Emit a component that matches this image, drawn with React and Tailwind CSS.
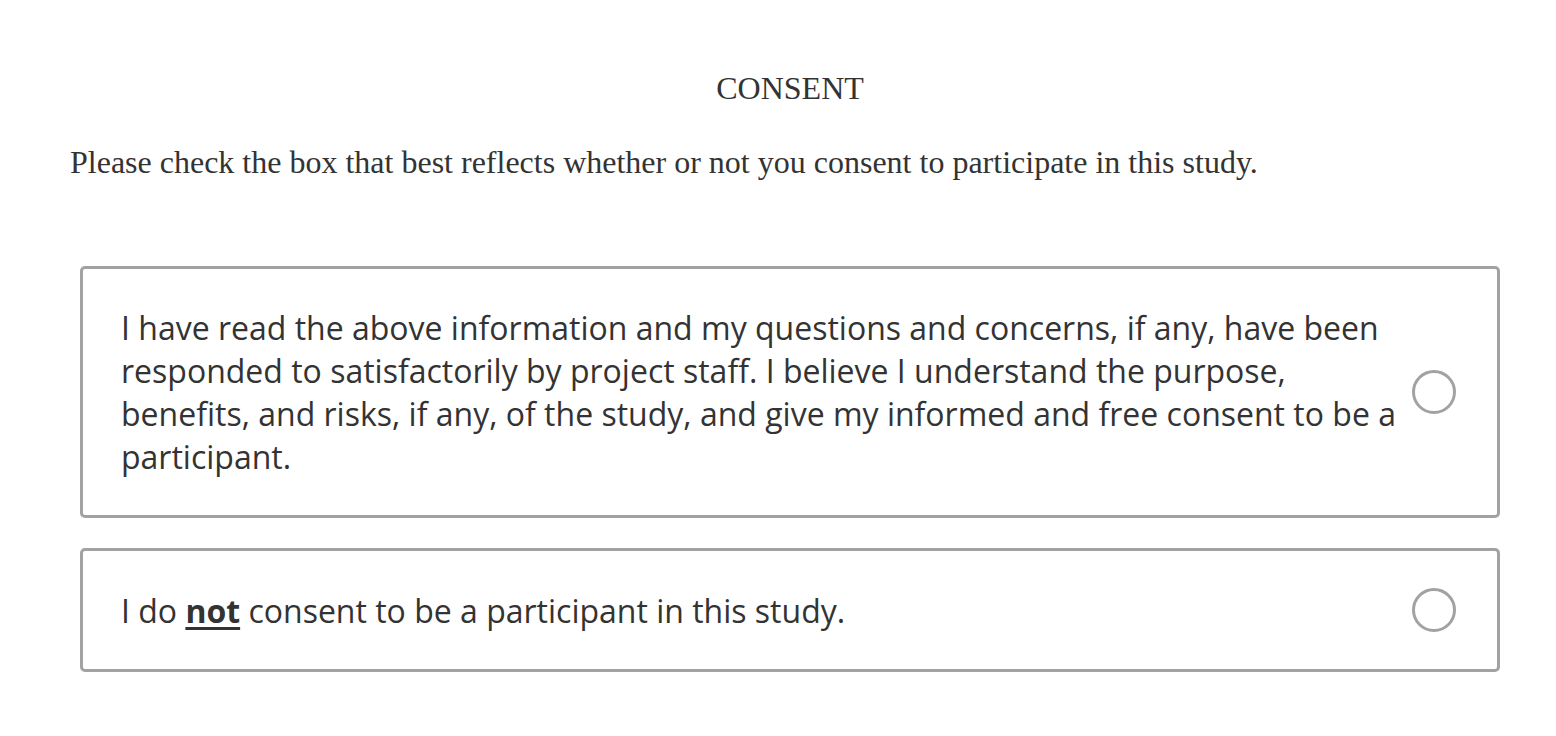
import React, { useState } from 'react';

const options = [
  {
    id: 'yes',
    label: (
      <>
        I have read the above information and my questions and concerns, if any, have been responded to
        satisfactorily by project staff. I believe I understand the purpose, benefits, and risks, if any, of the
        study, and give my informed and free consent to be a participant.
      </>
    ),
  },
  {
    id: 'no',
    label: (
      <>
        I do <b className="font-bold underline underline-offset-4">not</b> consent to be a participant in this study.
      </>
    ),
  },
];

const App = () => {
  const [choice, setChoice] = useState(null);

  return (
    <div className="min-h-screen bg-white">
      <div className="w-[1440px] mx-[70px] pt-[69px]">
        {/* Question header */}
        <h1 className="text-center text-[32px] leading-[38px] text-[#333] font-['Liberation_Serif',serif]">
          CONSENT
        </h1>
        <p className="mt-[36px] text-[32px] leading-[38px] text-[#333] font-['Liberation_Serif',serif]">
          Please check the box that best reflects whether or not you consent to participate in this study.
        </p>

        {/* Choices */}
        <div className="mt-[85px] mx-[10px] flex flex-col gap-[30px]">
          {options.map((opt) => (
            <label
              key={opt.id}
              onClick={() => setChoice(opt.id)}
              className="flex items-center justify-between border-[3px] border-[#a2a2a2] rounded-[5px] bg-white pl-[38px] pr-[41px] py-[37px] cursor-pointer"
            >
              <span className="w-[1288px] text-[32px] leading-[43px] text-[#333] font-['Open_Sans',sans-serif]">
                {opt.label}
              </span>
              <span className="w-[44px] h-[44px] shrink-0 rounded-full border-[3px] border-[#a2a2a2] flex items-center justify-center">
                {choice === opt.id && <span className="w-[24px] h-[24px] rounded-full bg-[#a2a2a2]" />}
              </span>
            </label>
          ))}
        </div>
      </div>
    </div>
  );
};

export default App;
